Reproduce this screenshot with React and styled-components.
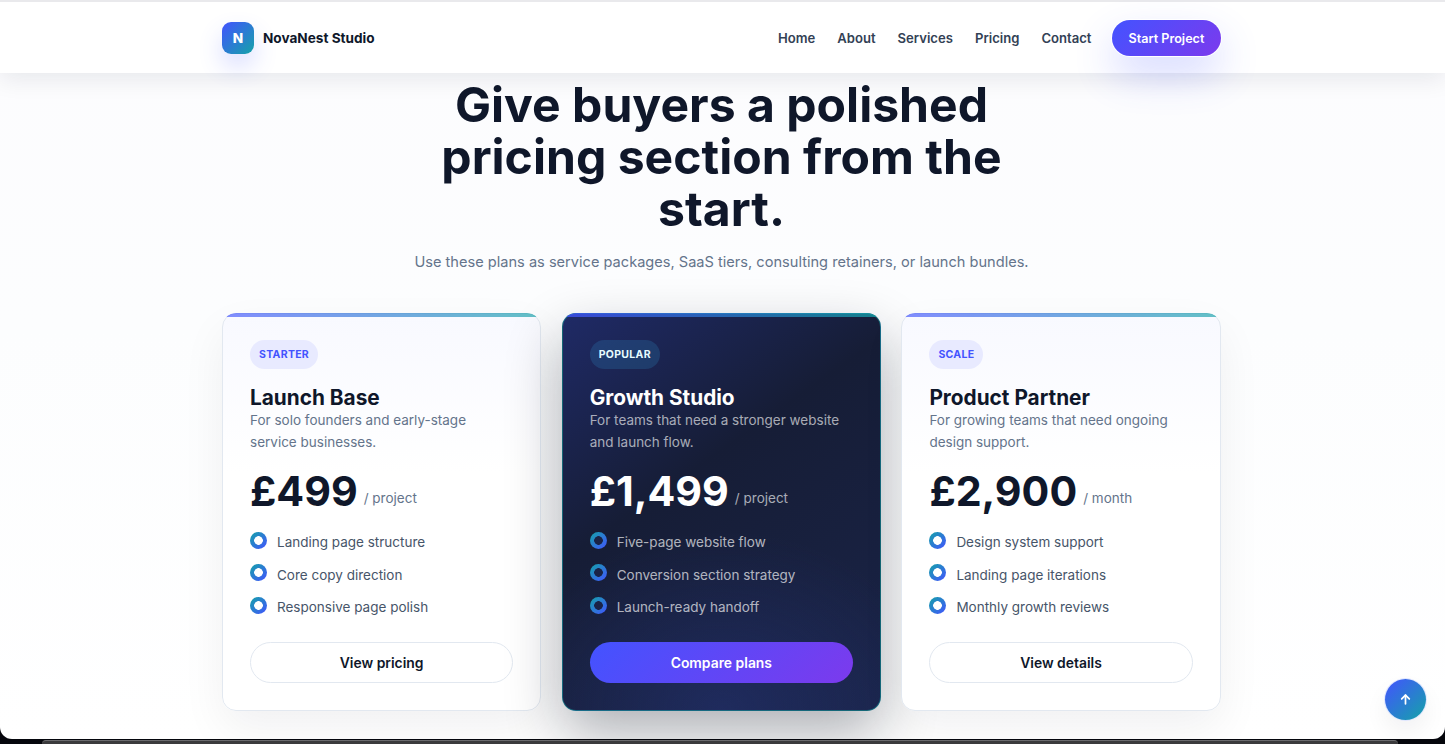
import React from 'react';
import styled, { createGlobalStyle } from 'styled-components';

const plans = [
  {
    tag: 'STARTER', name: 'Launch Base',
    text: 'For solo founders and early-stage service businesses.',
    price: '£499', per: '/ project',
    items: ['Landing page structure', 'Core copy direction', 'Responsive page polish'],
    cta: 'View pricing',
  },
  {
    tag: 'POPULAR', name: 'Growth Studio', dark: true,
    text: 'For teams that need a stronger website and launch flow.',
    price: '£1,499', per: '/ project',
    items: ['Five-page website flow', 'Conversion section strategy', 'Launch-ready handoff'],
    cta: 'Compare plans',
  },
  {
    tag: 'SCALE', name: 'Product Partner',
    text: 'For growing teams that need ongoing design support.',
    price: '£2,900', per: '/ month',
    items: ['Design system support', 'Landing page iterations', 'Monthly growth reviews'],
    cta: 'View details',
  },
];

const navLinks = ['Home', 'About', 'Services', 'Pricing', 'Contact'];

function App() {
  return (
    <>
      <GlobalStyle />
      <Screen>
        <Page>
          <Header>
            <HeaderInner>
              <Brand>
                <BrandMark>N</BrandMark>
                <BrandName>NovaNest Studio</BrandName>
              </Brand>
              <Nav>
                <NavLinks>
                  {navLinks.map((link) => <NavLink key={link}>{link}</NavLink>)}
                </NavLinks>
                <StartButton>Start Project</StartButton>
              </Nav>
            </HeaderInner>
          </Header>
          <Content>
            <Hero>
              <Title>Give buyers a polished pricing section from the start.</Title>
              <Lead>Use these plans as service packages, SaaS tiers, consulting retainers, or launch bundles.</Lead>
            </Hero>
            <Cards>
              {plans.map((plan) => (
                <Card key={plan.name} $dark={plan.dark}>
                  <Tag $dark={plan.dark}>{plan.tag}</Tag>
                  <PlanName $dark={plan.dark}>{plan.name}</PlanName>
                  <PlanText $dark={plan.dark}>{plan.text}</PlanText>
                  <PriceRow>
                    <Price $dark={plan.dark}>{plan.price}</Price>
                    <Per $dark={plan.dark}>{plan.per}</Per>
                  </PriceRow>
                  <Features>
                    {plan.items.map((item) => (
                      <Feature key={item} $dark={plan.dark}>
                        <Dot $dark={plan.dark} />
                        {item}
                      </Feature>
                    ))}
                  </Features>
                  <Cta $dark={plan.dark}>{plan.cta}</Cta>
                </Card>
              ))}
            </Cards>
          </Content>
          <TopButton aria-label="Back to top">
            <svg width="13" height="13" viewBox="0 0 24 24" fill="none" stroke="#fff" strokeWidth="3.2" strokeLinecap="round" strokeLinejoin="round">
              <path d="M12 20V4" />
              <path d="M5 11l7-7 7 7" />
            </svg>
          </TopButton>
        </Page>
        <Dock />
      </Screen>
    </>
  );
}

const GlobalStyle = createGlobalStyle`
  * { box-sizing: border-box; }
  html, body { margin: 0; padding: 0; height: 100%; overflow: hidden; background: #05060c; }
  body { font-family: Inter, "Liberation Sans", sans-serif; }
`;

const Screen = styled.div`
  position: relative;
  width: 1445px;
  height: 744px;
  overflow: hidden;
  background: #05060c;
`;

const Page = styled.main`
  position: relative;
  height: 739px;
  overflow: hidden;
  border-radius: 0 0 12px 12px;
  background: linear-gradient(180deg, #fcfcfe 0%, #fcfdfe 45%, #ffffff 100%);
`;

const Dock = styled.div`
  position: absolute;
  left: 42px;
  right: 47px;
  bottom: 0;
  height: 4px;
  border-radius: 8px 8px 0 0;
  background: #3a3a3c;
  border-top: 1px solid #6b6b6e;
`;

const Header = styled.header`
  position: relative;
  z-index: 2;
  height: 73px;
  padding-right: 2px;
  border-top: 2px solid #e9e9ec;
  background: rgba(255, 255, 255, 0.94);
  box-shadow: 0 6px 24px rgba(15, 23, 42, 0.09);
`;

const HeaderInner = styled.div`
  width: 999px;
  height: 71px;
  margin: 0 auto;
  display: flex;
  align-items: center;
  justify-content: space-between;
`;

const Brand = styled.div`
  display: flex;
  align-items: center;
  gap: 9px;
  margin-top: 1px;
`;

const BrandMark = styled.div`
  width: 32px;
  height: 32px;
  border-radius: 9px;
  display: flex;
  align-items: center;
  justify-content: center;
  background: linear-gradient(135deg, #4353ff, #14a3a8);
  box-shadow: 0 12px 24px rgba(67, 83, 255, 0.2);
  color: #fff;
  font-size: 13.6px;
  font-weight: 800;
`;

const BrandName = styled.div`
  color: #0f172a;
  font-size: 13.6px;
  font-weight: 700;
`;

const Nav = styled.nav`
  display: flex;
  align-items: center;
  gap: 20.5px;
`;

const NavLinks = styled.div`
  display: flex;
  align-items: center;
  gap: 22px;
  margin-top: 1px;
`;

const NavLink = styled.a`
  color: #334155;
  font-size: 13.1px;
  font-weight: 600;
`;

const StartButton = styled.button`
  width: 109px;
  height: 36px;
  margin-top: 1px;
  border: 0;
  border-radius: 999px;
  padding: 0;
  background: linear-gradient(135deg, #4353ff, #7c3aed);
  box-shadow: 0 0 0 1px #fff, 0 18px 40px rgba(67, 83, 255, 0.24);
  color: #fff;
  font: 600 12.6px Inter, sans-serif;
`;

const Content = styled.div`
  padding-right: 2px;
`;

const Hero = styled.section`
  width: 620px;
  margin: 6px auto 0;
  text-align: center;
`;

const Title = styled.h1`
  margin: 0;
  color: #0f172a;
  font-size: 48.1px;
  line-height: 52px;
  font-weight: 700;
`;

const Lead = styled.p`
  margin: 15px -60px 0;
  color: #64748b;
  font-size: 14.6px;
  line-height: 24px;
`;

const Cards = styled.section`
  width: 999px;
  margin: 39px auto 0;
  display: grid;
  grid-template-columns: repeat(3, 319.3px);
  gap: 20.4px;
`;

const Card = styled.article`
  position: relative;
  height: 398px;
  padding: 26px 27px;
  border-radius: 14px;
  border: 1px solid ${(p) => (p.$dark ? 'rgba(20, 163, 168, 0.55)' : '#e2e8f0')};
  background: ${(p) => (p.$dark
    ? 'radial-gradient(ellipse 70% 45% at 50% 100%, rgba(37, 52, 120, 0.5), transparent), linear-gradient(145deg, #1f2a66 0%, #161d36 40%, #1a2448 100%)'
    : 'linear-gradient(180deg, #f8f9ff 0%, #ffffff 40%)')};
  box-shadow: ${(p) => (p.$dark ? '0 24px 55px rgba(10, 14, 30, 0.32)' : '0 18px 45px rgba(15, 23, 42, 0.06)')};

  &::before {
    content: '';
    position: absolute;
    top: -1px;
    left: -1px;
    right: -1px;
    height: 14px;
    border-radius: 14px 14px 0 0;
    background: linear-gradient(90deg, #4353ff, #14a3a8);
    mask-image: linear-gradient(#000 0 4px, transparent 4px);
    opacity: ${(p) => (p.$dark ? 0.75 : 0.65)};
  }
`;

const Tag = styled.span`
  display: block;
  width: fit-content;
  height: 29px;
  padding: 0 9px;
  border-radius: 999px;
  background: ${(p) => (p.$dark ? 'rgba(56, 189, 248, 0.16)' : '#e8eaff')};
  color: ${(p) => (p.$dark ? '#e6fbff' : '#4353ff')};
  font-size: 10.5px;
  font-weight: 700;
  line-height: 29px;
  letter-spacing: 0.3px;
`;

const PlanName = styled.h3`
  margin: 17px 0 0;
  color: ${(p) => (p.$dark ? '#fff' : '#0f172a')};
  font-size: 20.8px;
  line-height: 23px;
  font-weight: 700;
`;

const PlanText = styled.p`
  margin: 0;
  color: ${(p) => (p.$dark ? 'rgba(255, 255, 255, 0.64)' : '#64748b')};
  font-size: 13.5px;
  line-height: 22px;
`;

const PriceRow = styled.div`
  display: flex;
  align-items: center;
  gap: 6px;
  margin-top: 13px;
`;

const Price = styled.strong`
  color: ${(p) => (p.$dark ? '#fff' : '#0f172a')};
  font-size: 41.2px;
  line-height: 50px;
  font-weight: 700;
`;

const Per = styled.span`
  margin-top: 14px;
  color: ${(p) => (p.$dark ? 'rgba(255, 255, 255, 0.64)' : '#64748b')};
  font-size: 13.5px;
`;

const Features = styled.ul`
  list-style: none;
  margin: 15px 0 0;
  padding: 0;
  display: grid;
  gap: 10.5px;
`;

const Feature = styled.li`
  display: flex;
  gap: 10px;
  color: ${(p) => (p.$dark ? 'rgba(255, 255, 255, 0.68)' : '#475569')};
  font-size: 13.5px;
  line-height: 22px;
`;

const Dot = styled.span`
  flex: none;
  width: 17px;
  height: 17px;
  margin-top: 0.5px;
  border-radius: 50%;
  background:
    radial-gradient(circle, ${(p) => (p.$dark ? '#1a2346' : '#ffffff')} 0 4px, transparent 4.6px),
    linear-gradient(135deg, #14a3a8, #4353ff);
`;

const Cta = styled.button`
  display: block;
  width: 100%;
  height: 41px;
  margin-top: 24px;
  border-radius: 999px;
  border: ${(p) => (p.$dark ? '0' : '1px solid #e2e8f0')};
  background: ${(p) => (p.$dark ? 'linear-gradient(135deg, #4353ff, #7c3aed)' : '#fff')};
  color: ${(p) => (p.$dark ? '#fff' : '#0f172a')};
  font: 600 13.9px Inter, sans-serif;
`;

const TopButton = styled.button`
  position: absolute;
  right: 19px;
  bottom: 19px;
  width: 41px;
  height: 41px;
  padding: 0;
  border: 0;
  border-radius: 50%;
  display: flex;
  align-items: center;
  justify-content: center;
  background: linear-gradient(135deg, #4353ff, #14a3a8);
  box-shadow: 0 0 0 1px #dfe6ff, 0 12px 24px rgba(15, 23, 42, 0.06);
`;

export default App;
